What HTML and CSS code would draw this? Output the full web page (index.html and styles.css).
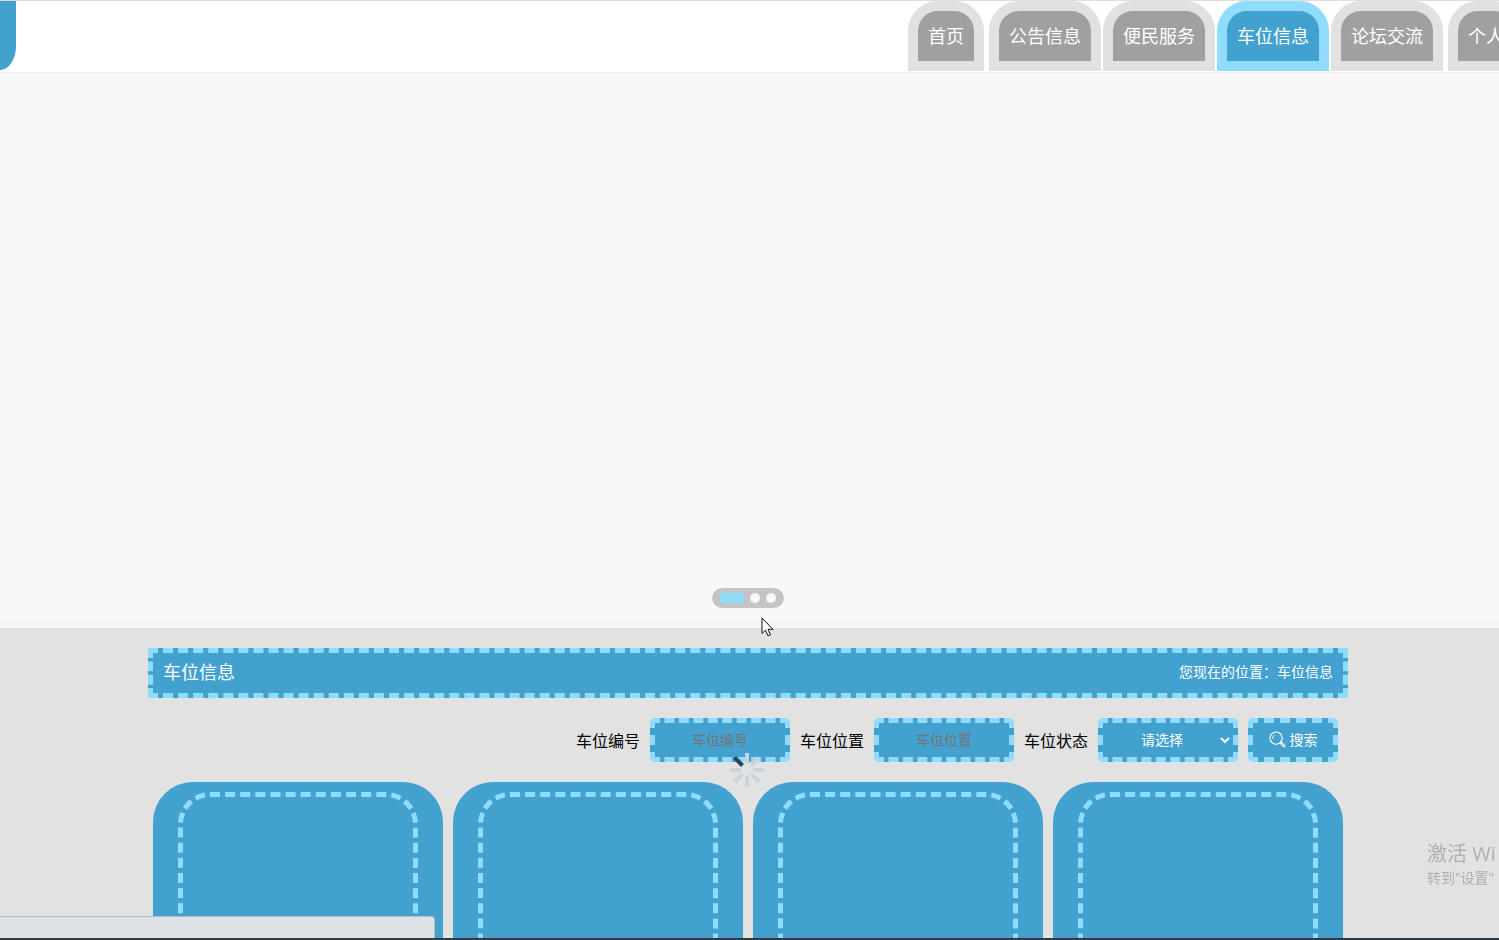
FILE: index.html
```html
<!DOCTYPE html>
<html lang="zh-CN">
<head>
<meta charset="utf-8">
<meta name="viewport" content="width=device-width, initial-scale=1">
<title>车位信息</title>
<link rel="stylesheet" href="styles.css">
</head>
<body>
<div class="page">
  <header class="header">
    <div class="brand"></div>
    <nav class="nav">
      <a class="tab" href="#">首页</a>
      <div class="nav-group">
        <a class="tab" href="#">公告信息</a>
        <a class="tab" href="#">便民服务</a>
        <a class="tab tab-active" href="#" aria-current="page">车位信息</a>
        <a class="tab" href="#">论坛交流</a>
      </div>
      <a class="tab" href="#">个人</a>
    </nav>
  </header>

  <section class="carousel">
    <div class="dots">
      <button class="dot dot-active" type="button" aria-label="1"></button>
      <button class="dot" type="button" aria-label="2"></button>
      <button class="dot" type="button" aria-label="3"></button>
    </div>
  </section>

  <main class="main">
    <div class="container">
      <div class="title-bar">
        <h1 class="title">车位信息</h1>
        <p class="crumb">您现在的位置：车位信息</p>
      </div>

      <form class="search">
        <label class="label" for="code">车位编号</label>
        <input class="field" id="code" type="text" placeholder="车位编号">
        <label class="label" for="place">车位位置</label>
        <input class="field" id="place" type="text" placeholder="车位位置">
        <label class="label" for="state">车位状态</label>
        <select class="field" id="state"><option>请选择</option></select>
        <button class="submit" type="button">
          <svg class="submit-icon" viewBox="0 0 18 18" fill="none" stroke="currentColor" aria-hidden="true">
            <circle cx="7.500" cy="7.500" r="6.500" stroke-width="1.200"/>
            <path d="M4 8.500A3.800 3.800 0 0 1 6 4.300" stroke-width="1"/>
            <path d="M11.500 12.500l1-1 4 3.800a.8.8 0 0 1-1.200 1.200z" stroke-width="1.200"/>
          </svg>
          搜索
        </button>
      </form>

      <div class="cards">
        <a class="card" href="#"><span class="card-frame"></span></a>
        <a class="card" href="#"><span class="card-frame"></span></a>
        <a class="card" href="#"><span class="card-frame"></span></a>
        <a class="card" href="#"><span class="card-frame"></span></a>
      </div>
    </div>
  </main>
</div>

<svg class="spinner" viewBox="0 0 36 36" aria-hidden="true">
  <g stroke="#cbd3da" stroke-width="4">
    <path d="M18 1v11M18 24v11M1 18h11M24 18h11M22.200 13.800l7.800-7.800M22.200 22.200l7.800 7.800M13.800 22.200l-7.800 7.800"/>
  </g>
  <path d="M5.500 5.500l8 8" stroke="#25475f" stroke-width="4"/>
</svg>

<svg class="pointer" viewBox="0 0 13 20" aria-hidden="true">
  <path d="M1 1v15.500l3.500-3.300 2.500 5.600 2.500-1-2.400-5.500h4.900z" fill="#fff" stroke="#111"/>
</svg>

<div class="watermark">
  <p class="watermark-title">激活 Wi</p>
  <p class="watermark-text">转到"设置"</p>
</div>
<div class="status"></div>
<div class="taskbar"></div>
</body>
</html>
```
FILE: styles.css
```css
* {
  box-sizing: border-box;
}

body {
  margin: 0;
  background: #e2e2e2;
  font-family: "Noto Sans CJK SC", sans-serif;
  font-size: 14px;
}

h1, p {
  margin: 0;
  font-weight: 400;
}

.page {
  height: 100vh;
  overflow: hidden;
}

.header {
  display: flex;
  justify-content: space-between;
  height: 73px;
  border-top: 1px solid #dedee0;
  border-bottom: 1px solid #fbeaec;
  background: #fff;
  overflow: hidden;
}

.brand {
  width: 16px;
  height: 69px;
  border-bottom-right-radius: 16px 24px;
  background: #43a1cf;
}

.nav {
  display: flex;
  flex: 0 0 591px;
  gap: 5px;
  min-width: 0;
  height: 70px;
}

.nav-group {
  display: flex;
  flex: none;
  gap: 2px;
}

.tab {
  flex: none;
  height: 70px;
  padding: 0 10px;
  border: 10px solid #e1e1e3;
  border-radius: 30px 30px 0 0;
  background: #a0a0a0;
  color: #fff;
  font-size: 18px;
  line-height: 48px;
  text-decoration: none;
  white-space: nowrap;
}

.tab-active {
  border-color: #8fdcff;
  background: #43a1cf;
}

.carousel {
  display: flex;
  align-items: flex-end;
  justify-content: center;
  height: 555px;
  padding: 0 3px 15px 0;
  border-bottom: 5px solid #f8f5f5;
  background: #f8f8f8;
  box-shadow: inset 0 -1px #fbe6e8;
}

.dots {
  display: flex;
  align-items: center;
  gap: 6px;
  height: 20px;
  padding: 0 8px;
  border-radius: 10px;
  background: #c4c4c4;
}

.dot {
  width: 10px;
  height: 10px;
  padding: 0;
  border: 0;
  border-radius: 5px;
  background: #f8f8f8;
}

.dot-active {
  width: 24px;
  border-radius: 3px;
  background: #8fdcff;
}

.main {
  padding: 20px 3px 0 0;
}

.container {
  max-width: 1200px;
  margin: 0 auto;
}

.title-bar {
  display: flex;
  align-items: center;
  justify-content: space-between;
  height: 50px;
  padding: 0 10px 4px;
  border: 5px dashed #8fdcff;
  background: #43a1cf;
  color: #fff;
}

.title {
  font-size: 18px;
  line-height: 36px;
}

.search {
  display: flex;
  justify-content: flex-end;
  gap: 10px;
  padding: 20px 10px;
}

.label {
  color: #000;
  font-size: 16px;
  line-height: 44px;
}

.field,
.submit {
  height: 44px;
  border: 5px dashed #8fdcff;
  border-radius: 5px;
  background-color: #43a1cf;
  color: #fff;
  font-family: inherit;
  font-size: 14px;
  text-align: center;
}

.field {
  width: 140px;
  padding: 0 10px 2px;
}

.field::placeholder {
  color: #757575;
}

.submit {
  display: flex;
  align-items: center;
  justify-content: center;
  gap: 4px;
  width: 90px;
  padding: 0 0 2px;
}

.submit-icon {
  width: 17px;
  height: 17px;
}

.cards {
  display: grid;
  grid-template-columns: repeat(4, 1fr);
  gap: 10px;
  padding: 0 5px;
}

.card {
  height: 320px;
  padding: 10px 25px;
  border-radius: 40px;
  background: #43a1cf;
}

.card-frame {
  display: block;
  height: 240px;
  border: 5px dashed #8fdcff;
  border-radius: 32px;
}

.spinner {
  position: fixed;
  top: 752px;
  left: 729px;
  width: 36px;
  height: 36px;
}

.pointer {
  position: fixed;
  top: 617px;
  left: 761px;
  width: 13px;
  height: 20px;
}

.watermark {
  position: fixed;
  top: 840px;
  left: 1427px;
  color: #b0b0b0;
  font-family: "Open Sans", "Noto Sans CJK SC", sans-serif;
  white-space: nowrap;
}

.watermark-title {
  font-size: 20px;
  line-height: 28px;
}

.watermark-text {
  font-size: 14px;
  line-height: 20px;
}

.status {
  position: fixed;
  bottom: 2px;
  left: 0;
  width: 435px;
  height: 22px;
  border: 1px solid #b4bcc4;
  border-width: 1px 1px 0 0;
  border-top-right-radius: 4px;
  background: #dee1e6;
}

.taskbar {
  position: fixed;
  right: 0;
  bottom: 0;
  left: 0;
  height: 2px;
  background: #343a42;
}
```
